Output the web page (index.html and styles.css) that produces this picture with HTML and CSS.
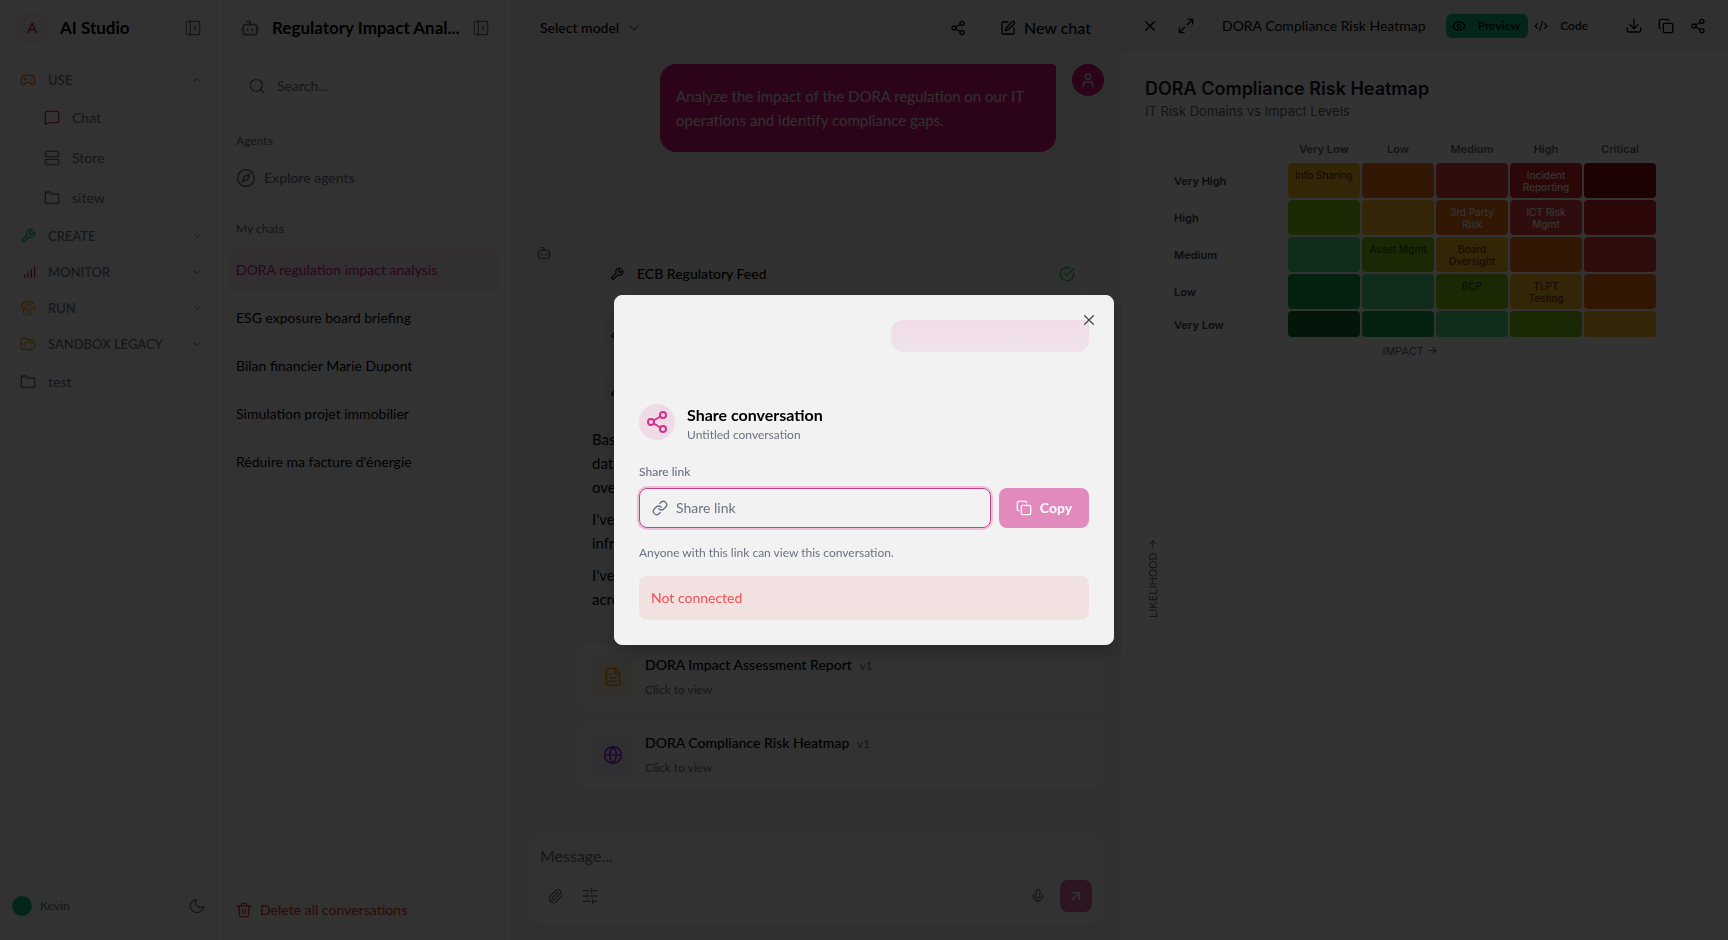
FILE: index.html
```html
<!DOCTYPE html>
<html lang="en">
<head>
    <meta charset="UTF-8">
    <meta name="viewport" content="width=device-width, initial-scale=1">
    <title>AI Studio</title>
    <link rel="stylesheet" href="styles.css">
</head>
<body>
    <!-- icon sprite -->
    <svg class="sprite" aria-hidden="true">
        <symbol id="i-panel" viewBox="0 0 24 24"><rect x="2" y="2" width="20" height="20" rx="2"/><path d="M8 2v20M16.500 9l-3 3 3 3"/></symbol>
        <symbol id="i-bot" viewBox="0 0 24 24"><path d="M12 8V4H8"/><rect x="4" y="8" width="16" height="12" rx="2"/><path d="M2 14h2M20 14h2M15 13v2M9 13v2"/></symbol>
        <symbol id="i-gamepad" viewBox="0 0 24 24"><path d="M6 11h4M8 9v4M15 12h.01M18 10h.01"/><path d="M17.320 5H6.680a4 4 0 0 0-3.978 3.590C2.604 9.416 2 14.456 2 16a3 3 0 0 0 3 3c1 0 1.500-.5 2-1l1.414-1.414A2 2 0 0 1 9.828 16h4.344a2 2 0 0 1 1.414.586L17 18c.5.5 1 1 2 1a3 3 0 0 0 3-3c0-1.545-.604-6.584-.685-7.258A4 4 0 0 0 17.320 5z"/></symbol>
        <symbol id="i-chat" viewBox="0 0 24 24"><path d="M22 17a2 2 0 0 1-2 2H6.800a2 2 0 0 0-1.400.6L2 22V4a2 2 0 0 1 2-2h16a2 2 0 0 1 2 2z"/></symbol>
        <symbol id="i-server" viewBox="0 0 24 24"><rect x="2" y="2" width="20" height="8" rx="2"/><rect x="2" y="14" width="20" height="8" rx="2"/><path d="M6 6h.01M6 18h.01"/></symbol>
        <symbol id="i-folder" viewBox="0 0 24 24"><path d="M20 20a2 2 0 0 0 2-2V8a2 2 0 0 0-2-2h-7.900a2 2 0 0 1-1.690-.9L9.600 3.900A2 2 0 0 0 7.930 3H4a2 2 0 0 0-2 2v13a2 2 0 0 0 2 2Z"/></symbol>
        <symbol id="i-folder-open" viewBox="0 0 24 24"><path d="m6 14 1.500-2.900A2 2 0 0 1 9.240 10H20a2 2 0 0 1 1.940 2.500l-1.540 6a2 2 0 0 1-1.950 1.500H4a2 2 0 0 1-2-2V5a2 2 0 0 1 2-2h3.900a2 2 0 0 1 1.690.9l.81 1.200a2 2 0 0 0 1.670.9H18a2 2 0 0 1 2 2v2"/></symbol>
        <symbol id="i-wrench" viewBox="0 0 24 24"><path d="M14.700 6.300a1 1 0 0 0 0 1.400l1.600 1.600a1 1 0 0 0 1.400 0l3.770-3.770a6 6 0 0 1-7.940 7.940l-6.910 6.910a2.120 2.120 0 0 1-3-3l6.910-6.910a6 6 0 0 1 7.940-7.940l-3.760 3.760z"/></symbol>
        <symbol id="i-signal" viewBox="0 0 24 24"><path d="M2 20h.01M7 20v-4M12 20v-8M17 20V8M22 4v16"/></symbol>
        <symbol id="i-finger" viewBox="0 0 24 24"><path d="M12 10a2 2 0 0 0-2 2c0 1.020-.1 2.510-.26 4M14 13.120c0 2.380 0 6.380-1 8.880M17.290 21.020c.12-.6.430-2.300.5-3.020M2 12a10 10 0 0 1 18-6M2 16h.01M21.800 16c.2-2 .131-5.354 0-6M5 19.500C5.500 18 6 15 6 12a6 6 0 0 1 .34-2M8.650 22c.21-.66.450-1.320.570-2M9 6.800a6 6 0 0 1 9 5.200v2"/></symbol>
        <symbol id="i-up" viewBox="0 0 24 24"><path d="m6 15 6-6 6 6"/></symbol>
        <symbol id="i-down" viewBox="0 0 24 24"><path d="m6 9 6 6 6-6"/></symbol>
        <symbol id="i-user" viewBox="0 0 24 24"><path d="M19 21v-2a4 4 0 0 0-4-4H9a4 4 0 0 0-4 4v2"/><circle cx="12" cy="7" r="4"/></symbol>
        <symbol id="i-moon" viewBox="0 0 24 24"><path d="M11 2a8 8 0 0 0 11 11A10 10 0 1 1 11 2Z"/></symbol>
        <symbol id="i-search" viewBox="0 0 24 24"><circle cx="11" cy="11" r="9"/><path d="m22 22-4.500-4.500"/></symbol>
        <symbol id="i-compass" viewBox="0 0 24 24"><circle cx="12" cy="12" r="10"/><path d="M16.240 7.760 14.400 13.200a2 2 0 0 1-1.200 1.200l-5.440 1.840L9.600 10.800a2 2 0 0 1 1.200-1.200z"/></symbol>
        <symbol id="i-trash" viewBox="0 0 24 24"><path d="M2 6h20M19 6v14a2 2 0 0 1-2 2H7a2 2 0 0 1-2-2V6M8 6V4a2 2 0 0 1 2-2h4a2 2 0 0 1 2 2v2M10 11v6M14 11v6"/></symbol>
        <symbol id="i-share" viewBox="0 0 24 24"><circle cx="18" cy="5" r="3"/><circle cx="6" cy="12" r="3"/><circle cx="18" cy="19" r="3"/><path d="m8.590 13.510 6.830 3.980M15.410 6.510l-6.820 3.980"/></symbol>
        <symbol id="i-edit" viewBox="0 0 24 24"><path d="M12 3H5a2 2 0 0 0-2 2v14a2 2 0 0 0 2 2h14a2 2 0 0 0 2-2v-7"/><path d="M18.400 2.600a2.100 2.100 0 0 1 3 3L12.400 14.600 8 16l1.400-4.400z"/></symbol>
        <symbol id="i-check" viewBox="0 0 24 24"><path d="M21.800 10A10 10 0 1 1 17 3.340"/><path d="m9 11 3 3L22 4"/></symbol>
        <symbol id="i-file" viewBox="0 0 24 24"><path d="M15 2H6a2 2 0 0 0-2 2v16a2 2 0 0 0 2 2h12a2 2 0 0 0 2-2V7Z"/><path d="M14 2v4a2 2 0 0 0 2 2h4M10 9H8M16 13H8M16 17H8"/></symbol>
        <symbol id="i-globe" viewBox="0 0 24 24"><circle cx="12" cy="12" r="10"/><path d="M12 2a14.500 14.500 0 0 0 0 20 14.500 14.500 0 0 0 0-20M2 12h20"/></symbol>
        <symbol id="i-clip" viewBox="0 0 24 24"><path d="m21.440 11.050-9.190 9.190a6 6 0 0 1-8.490-8.490l8.570-8.570A4 4 0 1 1 18 8.840l-8.590 8.570a2 2 0 0 1-2.830-2.830l8.490-8.480"/></symbol>
        <symbol id="i-sliders" viewBox="0 0 24 24"><path d="M22 4h-8M10 4H2M22 12H12M8 12H2M22 20h-6M12 20H2M14 1v6M8 9v6M16 17v6"/></symbol>
        <symbol id="i-mic" viewBox="0 0 24 24"><rect x="9" y="2" width="6" height="13" rx="3"/><path d="M19 10v2a7 7 0 0 1-14 0v-2M12 19v3"/></symbol>
        <symbol id="i-arrow" viewBox="0 0 24 24"><path d="M7 7h10v10M7 17 17 7"/></symbol>
        <symbol id="i-x" viewBox="0 0 24 24"><path d="M18.500 5.500l-13 13M5.500 5.500l13 13"/></symbol>
        <symbol id="i-expand" viewBox="0 0 24 24"><path d="M15 2h7v7M9 22H2v-7M22 2l-8 8M2 22l8-8"/></symbol>
        <symbol id="i-eye" viewBox="0 0 24 24"><path d="M2 12.300a1 1 0 0 1 0-.6 10.800 10.800 0 0 1 20 0 1 1 0 0 1 0 .6 10.800 10.800 0 0 1-20 0"/><circle cx="12" cy="12" r="3"/></symbol>
        <symbol id="i-code" viewBox="0 0 24 24"><path d="m18 16 4-4-4-4M6 8l-4 4 4 4M14.500 4l-5 16"/></symbol>
        <symbol id="i-download" viewBox="0 0 24 24"><path d="M22 15v4a2 2 0 0 1-2 2H4a2 2 0 0 1-2-2v-4M6 10l6 6 6-6M12 16V2"/></symbol>
        <symbol id="i-copy" viewBox="0 0 24 24"><rect x="8" y="8" width="14" height="14" rx="2"/><path d="M4 16a2 2 0 0 1-2-2V4a2 2 0 0 1 2-2h10a2 2 0 0 1 2 2"/></symbol>
        <symbol id="i-link" viewBox="0 0 24 24"><path d="M10 13a5 5 0 0 0 7.540.54l3-3a5 5 0 0 0-7.070-7.070l-1.720 1.710"/><path d="M14 11a5 5 0 0 0-7.540-.54l-3 3a5 5 0 0 0 7.070 7.070l1.710-1.710"/></symbol>
    </svg>

    <div class="app">
        <aside class="sidebar">
            <header class="side-header">
                <span class="logo">A</span>
                <span class="brand">AI Studio</span>
                <button class="icon-btn" aria-label="Collapse sidebar"><svg class="icon"><use href="#i-panel"/></svg></button>
            </header>
            <nav class="nav">
                <button class="nav-group"><svg class="icon orange"><use href="#i-gamepad"/></svg><span>USE</span><svg class="chev"><use href="#i-up"/></svg></button>
                <a class="nav-item sub" href="#"><svg class="icon rose"><use href="#i-chat"/></svg>Chat</a>
                <a class="nav-item sub" href="#"><svg class="icon"><use href="#i-server"/></svg>Store</a>
                <a class="nav-item sub" href="#"><svg class="icon"><use href="#i-folder"/></svg>sitew</a>
                <button class="nav-group"><svg class="icon green"><use href="#i-wrench"/></svg><span>CREATE</span><svg class="chev"><use href="#i-down"/></svg></button>
                <button class="nav-group"><svg class="icon rose"><use href="#i-signal"/></svg><span>MONITOR</span><svg class="chev"><use href="#i-down"/></svg></button>
                <button class="nav-group"><svg class="icon amber"><use href="#i-finger"/></svg><span>RUN</span><svg class="chev"><use href="#i-down"/></svg></button>
                <button class="nav-group"><svg class="icon amber"><use href="#i-folder-open"/></svg><span>SANDBOX LEGACY</span><svg class="chev"><use href="#i-down"/></svg></button>
                <a class="nav-item" href="#"><svg class="icon"><use href="#i-folder"/></svg>test</a>
            </nav>
            <footer class="user">
                <span class="user-pic"><svg><use href="#i-user"/></svg></span>
                <span class="user-name">Kevin</span>
                <button class="icon-btn" aria-label="Dark mode"><svg class="icon"><use href="#i-moon"/></svg></button>
            </footer>
        </aside>

        <aside class="chats">
            <header class="side-header">
                <svg class="icon-lg"><use href="#i-bot"/></svg>
                <span class="brand">Regulatory Impact Anal...</span>
                <button class="icon-btn" aria-label="Collapse chats"><svg class="icon"><use href="#i-panel"/></svg></button>
            </header>
            <div class="chats-body">
                <label class="search">
                    <svg class="icon"><use href="#i-search"/></svg>
                    <input type="text" placeholder="Search..." aria-label="Search">
                </label>
                <h2 class="label">Agents</h2>
                <a class="explore" href="#"><svg class="icon-lg"><use href="#i-compass"/></svg>Explore agents</a>
                <h2 class="label">My chats</h2>
                <div class="chat-list">
                    <a class="active" href="#">DORA regulation impact analysis</a>
                    <a href="#">ESG exposure board briefing</a>
                    <a href="#">Bilan financier Marie Dupont</a>
                    <a href="#">Simulation projet immobilier</a>
                    <a href="#">Réduire ma facture d'énergie</a>
                </div>
            </div>
            <footer class="chats-footer">
                <button class="delete"><svg class="icon"><use href="#i-trash"/></svg>Delete all conversations</button>
            </footer>
        </aside>

        <main class="chat">
            <header class="chat-header">
                <button class="model">Select model<svg class="icon"><use href="#i-down"/></svg></button>
                <button class="icon-btn" aria-label="Share"><svg class="icon"><use href="#i-share"/></svg></button>
                <button class="new-chat"><svg class="icon"><use href="#i-edit"/></svg>New chat</button>
            </header>
            <div class="messages">
                <div class="msg-user">
                    <p class="bubble">Analyze the impact of the DORA regulation on our IT operations and identify compliance gaps.</p>
                    <span class="avatar"><svg class="icon"><use href="#i-user"/></svg></span>
                </div>
                <div class="msg-bot">
                    <svg class="icon bot"><use href="#i-bot"/></svg>
                    <div class="bot-body">
                        <div class="tool"><span class="tool-icon"><svg class="icon-sm"><use href="#i-wrench"/></svg></span><span>ECB Regulatory Feed</span><svg class="icon ok"><use href="#i-check"/></svg></div>
                        <div class="tool"><span class="tool-icon"><svg class="icon-sm"><use href="#i-wrench"/></svg></span></div>
                        <div class="tool"><span class="tool-icon"><svg class="icon-sm"><use href="#i-wrench"/></svg></span></div>
                        <div class="answer">
                            <p>Bas<br>data<br>over</p>
                            <p>I've<br>infra</p>
                            <p>I've<br>acro</p>
                        </div>
                    </div>
                </div>
                <div class="artifacts">
                    <a class="artifact" href="#">
                        <span class="art-icon doc"><svg class="icon-lg"><use href="#i-file"/></svg></span>
                        <span class="art-text"><span class="art-title">DORA Impact Assessment Report <small>v1</small></span><span class="art-sub">Click to view</span></span>
                    </a>
                    <a class="artifact" href="#">
                        <span class="art-icon web"><svg class="icon-lg"><use href="#i-globe"/></svg></span>
                        <span class="art-text"><span class="art-title">DORA Compliance Risk Heatmap <small>v1</small></span><span class="art-sub">Click to view</span></span>
                    </a>
                </div>
            </div>
            <form class="composer">
                <textarea rows="1" placeholder="Message..." aria-label="Message"></textarea>
                <div class="composer-bar">
                    <button type="button" class="tool-btn" aria-label="Attach"><svg class="icon"><use href="#i-clip"/></svg></button>
                    <button type="button" class="tool-btn" aria-label="Settings"><svg class="icon"><use href="#i-sliders"/></svg></button>
                    <button type="button" class="tool-btn mic" aria-label="Record"><svg class="icon"><use href="#i-mic"/></svg></button>
                    <button type="button" class="send" aria-label="Send"><svg class="icon"><use href="#i-arrow"/></svg></button>
                </div>
            </form>
        </main>

        <section class="panel">
            <header class="panel-header">
                <button class="bar-btn" aria-label="Close panel"><svg class="icon"><use href="#i-x"/></svg></button>
                <button class="bar-btn" aria-label="Expand"><svg class="icon"><use href="#i-expand"/></svg></button>
                <span class="panel-title">DORA Compliance Risk Heatmap</span>
                <div class="tabs">
                    <button class="tab on"><svg class="icon-sm"><use href="#i-eye"/></svg>Preview</button>
                    <button class="tab"><svg class="icon-sm"><use href="#i-code"/></svg>Code</button>
                </div>
                <div class="panel-actions">
                    <button class="bar-btn" aria-label="Download"><svg class="icon"><use href="#i-download"/></svg></button>
                    <button class="bar-btn" aria-label="Copy"><svg class="icon"><use href="#i-copy"/></svg></button>
                    <button class="bar-btn" aria-label="Share"><svg class="icon"><use href="#i-share"/></svg></button>
                </div>
            </header>
            <div class="panel-body">
                <h1>DORA Compliance Risk Heatmap</h1>
                <p class="subtitle">IT Risk Domains vs Impact Levels</p>
                <div class="heatmap">
                    <table>
                        <thead>
                            <tr><th></th><th>Very Low</th><th>Low</th><th>Medium</th><th>High</th><th>Critical</th></tr>
                        </thead>
                        <tbody>
                            <tr><th>Very High</th><td class="c4">Info Sharing</td><td class="c5"></td><td class="c6"></td><td class="c7">Incident Reporting</td><td class="c8"></td></tr>
                            <tr><th>High</th><td class="c3"></td><td class="c4"></td><td class="c5">3rd Party Risk</td><td class="c6">ICT Risk Mgmt</td><td class="c7"></td></tr>
                            <tr><th>Medium</th><td class="c2"></td><td class="c3">Asset Mgmt</td><td class="c4">Board Oversight</td><td class="c5"></td><td class="c6"></td></tr>
                            <tr><th>Low</th><td class="c1"></td><td class="c2"></td><td class="c3">BCP</td><td class="c4">TLPT Testing</td><td class="c5"></td></tr>
                            <tr><th>Very Low</th><td class="c0"></td><td class="c1"></td><td class="c2"></td><td class="c3"></td><td class="c4"></td></tr>
                        </tbody>
                    </table>
                    <p class="axis-x">IMPACT →</p>
                </div>
                <p class="axis-y">LIKELIHOOD →</p>
            </div>
        </section>
    </div>

    <div class="overlay">
        <div class="modal" role="dialog" aria-labelledby="share-title">
            <button class="modal-close" aria-label="Close"><svg class="icon"><use href="#i-x"/></svg></button>
            <div class="ghost"></div>
            <div class="modal-head">
                <span class="modal-icon"><svg><use href="#i-share"/></svg></span>
                <div>
                    <h2 id="share-title">Share conversation</h2>
                    <p>Untitled conversation</p>
                </div>
            </div>
            <label class="modal-label" for="share-link">Share link</label>
            <div class="share-row">
                <div class="share-field">
                    <svg class="icon"><use href="#i-link"/></svg>
                    <input id="share-link" type="text" placeholder="Share link">
                </div>
                <button class="copy"><svg class="icon"><use href="#i-copy"/></svg>Copy</button>
            </div>
            <p class="hint">Anyone with this link can view this conversation.</p>
            <div class="alert">Not connected</div>
        </div>
    </div>
</body>
</html>
```
FILE: styles.css
```css
* {
    box-sizing: border-box;
}
body {
    margin: 0;
    font-family: Lato, "Liberation Sans", sans-serif;
    font-size: 14px;
    line-height: 20px;
    color: #000;
    background: #f0f0f0;
}
h1, h2, p {
    margin: 0;
}
a {
    color: inherit;
    text-decoration: none;
}
button, input, textarea {
    font: inherit;
    color: inherit;
    background: none;
    border: 0;
    padding: 0;
    outline: none;
}
svg {
    fill: none;
    stroke: currentColor;
    stroke-width: 2;
    stroke-linecap: round;
    stroke-linejoin: round;
    flex-shrink: 0;
}
.sprite {
    display: none;
}
.icon {
    width: 16px;
    height: 16px;
}
.icon-lg {
    width: 20px;
    height: 20px;
}
.icon-sm {
    width: 14px;
    height: 14px;
}
.icon-btn {
    display: flex;
    color: #6b7280;
}
.orange { color: #f97316; }
.rose { color: #db2777; }
.green { color: #10b981; }
.amber { color: #f59e0b; }

.app {
    display: flex;
    height: 100vh;
}

/* left sidebar */
.sidebar, .chats {
    display: flex;
    flex-direction: column;
    flex-shrink: 0;
    background: #fafafa;
    border-right: 1px solid #e5e7eb;
}
.sidebar {
    width: 224px;
    color: #6b7280;
}
.side-header {
    display: flex;
    align-items: center;
    gap: 12px;
    height: 56px;
    padding: 0 22px 0 16px;
    border-bottom: 1px solid #e5e7eb;
}
.logo {
    width: 32px;
    height: 32px;
    line-height: 32px;
    border-radius: 8px;
    background: #f6e8f0;
    color: #d2228a;
    font-weight: 700;
    text-align: center;
}
.brand {
    flex: 1;
    margin-right: -4px;
    color: #000;
    font-size: 17px;
    font-weight: 700;
    white-space: nowrap;
    overflow: hidden;
    text-overflow: ellipsis;
}
.nav {
    flex: 1;
    padding-top: 6px;
}
.nav-group, .nav-item {
    display: flex;
    align-items: center;
    gap: 12px;
    width: 100%;
    padding: 0 20px;
}
.nav-group {
    height: 36px;
    font-size: 13px;
    font-weight: 500;
    text-align: left;
}
.nav-group span {
    flex: 1;
}
.nav-item {
    height: 40px;
}
.nav-item.sub {
    padding-left: 44px;
}
.chev {
    width: 12px;
    height: 12px;
}
.user {
    display: flex;
    align-items: center;
    gap: 8px;
    height: 69px;
    padding: 0 18px 0 12px;
    border-top: 1px solid #e5e7eb;
    font-size: 12px;
    font-weight: 500;
}
.user-pic {
    display: flex;
    align-items: center;
    justify-content: center;
    width: 20px;
    height: 20px;
    border-radius: 50%;
    background: #10b981;
}
.user-pic svg {
    width: 8px;
    height: 8px;
    opacity: 0.4;
}
.user-name {
    flex: 1;
}

/* conversation list */
.chats {
    width: 288px;
}
.chats .side-header > svg {
    color: #6b7280;
}
.chats-body {
    flex: 1;
    padding: 12px 12px 0;
}
.search {
    display: flex;
    align-items: center;
    gap: 12px;
    height: 36px;
    padding: 0 12px;
    border: 1px solid #ededed;
    border-radius: 8px;
    background: #fcfcfc;
    color: #6b7280;
}
.search input {
    flex: 1;
    min-width: 0;
}
::placeholder {
    color: #6b7280;
    opacity: 1;
}
.label {
    margin-top: 27px;
    color: #6b7280;
    font-size: 12px;
    font-weight: 500;
}
.explore {
    display: flex;
    align-items: center;
    gap: 8px;
    height: 36px;
    margin-top: 9px;
    color: #6b7280;
    font-weight: 500;
}
.explore + .label {
    margin-top: 23px;
}
.chat-list {
    display: flex;
    flex-direction: column;
    gap: 4px;
    margin: 9px 0 0 -8px;
}
.chat-list a {
    padding: 12px 8px;
    border-radius: 8px;
}
.chat-list .active {
    background: #f6e8ee;
    color: #d2228a;
}
.chats-footer {
    display: flex;
    align-items: center;
    height: 61px;
    padding: 0 12px;
    border-top: 1px solid #e5e7eb;
}
.delete {
    display: flex;
    align-items: center;
    gap: 8px;
    color: #e0403e;
    font-weight: 500;
}

/* chat */
.chat {
    flex: 1;
    min-width: 0;
    display: flex;
    flex-direction: column;
    padding-bottom: 16px;
}
.chat-header {
    display: flex;
    align-items: center;
    height: 56px;
    padding: 0 29px 0 28px;
}
.chat-header .icon-btn {
    margin: 0 34px 0 auto;
    color: #000;
}
.model {
    display: flex;
    align-items: center;
    gap: 7px;
    font-weight: 500;
}
.model .icon {
    color: #6b7280;
}
.new-chat {
    display: flex;
    align-items: center;
    gap: 8px;
    font-size: 16px;
    font-weight: 500;
}
.messages {
    flex: 1;
    overflow: hidden;
    padding: 8px 16px 0;
}
.msg-user {
    display: flex;
    justify-content: flex-end;
    gap: 16px;
}
.bubble {
    max-width: 396px;
    padding: 20px 16px;
    border-radius: 16px 4px 16px 16px;
    background: #d9187f;
    color: #f5e6f0;
    font-size: 15px;
    line-height: 24px;
}
.avatar {
    display: flex;
    align-items: center;
    justify-content: center;
    width: 32px;
    height: 32px;
    border-radius: 50%;
    background: #d9187f;
    color: #f5e6f0;
}
.msg-bot {
    display: flex;
    gap: 40px;
    margin-top: 97px;
    padding: 0 16px 0 8px;
}
.bot {
    margin-top: -4px;
    color: #6b7280;
}
.bot-body {
    flex: 1;
}
.tool {
    display: flex;
    align-items: center;
    gap: 8px;
    height: 50px;
    margin-bottom: 8px;
    padding: 0 12px;
    border: 1px solid #f4f4f5;
    border-radius: 8px;
    background: #f5f5f5;
    font-weight: 500;
}
.tool-icon {
    display: flex;
    align-items: center;
    justify-content: center;
    width: 24px;
    height: 24px;
    border-radius: 6px;
    background: #ededed;
}
.ok {
    margin-left: auto;
    color: #22c55e;
}
.answer {
    margin-top: 12px;
    font-size: 15px;
    line-height: 24px;
}
.answer p + p {
    margin-top: 8px;
}
.artifacts {
    display: flex;
    flex-direction: column;
    gap: 10px;
    margin: 32px 0 0 49px;
}
.artifact {
    display: flex;
    align-items: center;
    gap: 12px;
    height: 68px;
    padding: 0 15px;
    border: 1px solid #f4f4f5;
    border-radius: 8px;
    background: #f8f8f8;
}
.art-icon {
    display: flex;
    align-items: center;
    justify-content: center;
    width: 40px;
    height: 40px;
    border-radius: 8px;
}
.doc {
    background: #f6efe2;
    color: #f59e0b;
}
.web {
    background: #f0ecf5;
    color: #9333ea;
}
.art-text {
    display: flex;
    flex-direction: column;
    gap: 4px;
}
.art-title {
    font-weight: 500;
}
.art-title small {
    margin-left: 4px;
    color: #6b7280;
    font-size: 12px;
    font-weight: 400;
}
.art-sub {
    color: #6b7280;
    font-size: 12px;
}
.composer {
    margin: 0 16px;
    padding: 12px;
    border-radius: 16px;
    background: #fafafa;
    color: #6b7280;
}
.composer textarea {
    display: block;
    width: 100%;
    height: 36px;
    resize: none;
    font-size: 16px;
    line-height: 24px;
}
.composer-bar {
    display: flex;
    align-items: center;
    gap: 2px;
}
.tool-btn, .send {
    display: flex;
    align-items: center;
    justify-content: center;
    width: 32px;
    height: 32px;
}
.mic {
    margin: 0 4px 0 auto;
}
.send {
    border-radius: 8px;
    background: #dd70ad;
    color: #fff;
}

/* artifact panel */
.panel {
    flex: 1;
    min-width: 0;
    display: flex;
    flex-direction: column;
}
.panel-header {
    display: flex;
    align-items: center;
    gap: 4px;
    height: 52px;
    padding: 0 14px;
}
.bar-btn {
    display: flex;
    align-items: center;
    justify-content: center;
    width: 32px;
    height: 32px;
}
.panel-title {
    flex: 1;
    margin-left: 16px;
    white-space: nowrap;
}
.tabs, .panel-actions {
    display: flex;
}
.panel-actions {
    margin-left: 18px;
}
.tab {
    display: flex;
    align-items: center;
    gap: 12px;
    height: 24px;
    padding: 0 8px 0 6px;
    border-radius: 6px;
    font-size: 12px;
    font-weight: 500;
}
.tab.on {
    background: #10b981;
}
.panel-body {
    flex: 1;
    padding: 24px;
    border: solid #eceef0;
    border-width: 1px 0 0 1px;
    border-radius: 6px 0 0 0;
    background: #fff;
    font-family: Inter, sans-serif;
}
.panel-body h1 {
    font-size: 18px;
    font-weight: 600;
    line-height: 24px;
    color: #1a1a2e;
}
.subtitle {
    color: #666;
    font-size: 13px;
}
.heatmap {
    max-width: 530px;
    margin-top: 18px;
}
.heatmap table {
    margin-left: 27px;
    border-spacing: 2px;
    table-layout: fixed;
    width: 486px;
}
.heatmap th, .heatmap td {
    height: 35px;
    padding: 6px 6px 5px;
    font-size: 10px;
    line-height: 12px;
    vertical-align: top;
    text-align: center;
}
.heatmap th {
    color: #374151;
    font-size: 11px;
    font-weight: 600;
    vertical-align: middle;
}
.heatmap th:first-child {
    width: 112px;
    padding-left: 0;
    text-align: left;
}
.heatmap thead th {
    height: 20px;
    padding: 0 0 4px;
    color: #666;
}
.heatmap tr:last-child td {
    height: 26px;
}
.heatmap tbody tr:last-child th {
    height: 26px;
}
.heatmap td {
    border-radius: 4px;
    font-weight: 500;
}
.c0 { background: #14702f; }
.c1 { background: #16a34a; }
.c2 { background: #4ade80; }
.c3 { background: #84cc16; color: #365314; }
.c4 { background: #fbbf24; color: #78350f; }
.c5 { background: #f97316; color: #fff; }
.c6 { background: #ef4444; color: #fff; }
.c7 { background: #dc2626; color: #fff; }
.c8 { background: #8b0a0a; }
.axis-x {
    margin-top: 2px;
    color: #666;
    font-size: 11px;
    text-align: center;
}
.axis-y {
    margin-top: 178px;
    width: 16px;
    color: #666;
    font-size: 11px;
    line-height: 16px;
    writing-mode: vertical-rl;
    transform: rotate(180deg);
}

/* share dialog */
.overlay {
    position: fixed;
    inset: 0;
    display: flex;
    align-items: center;
    justify-content: center;
    background: rgba(0, 0, 0, 0.8);
}
.modal {
    position: relative;
    width: 500px;
    padding: 24px;
    border: 1px solid #f0f1f2;
    border-radius: 8px;
    background: #f2f2f3;
    box-shadow: 0 8px 16px rgba(0, 0, 0, 0.2);
}
.modal-close {
    position: absolute;
    top: 16px;
    right: 16px;
    display: flex;
    color: #4a4a4c;
}
.ghost {
    width: 198px;
    height: 32px;
    margin-left: auto;
    border-radius: 12px 4px 12px 12px;
    background: linear-gradient(#f1dce7, #efe3eb);
}
.modal-head {
    display: flex;
    gap: 12px;
    margin-top: 52px;
}
.modal-icon {
    display: flex;
    align-items: center;
    justify-content: center;
    width: 36px;
    height: 36px;
    border-radius: 50%;
    background: #efdbe6;
    color: #d2308c;
}
.modal-icon svg {
    width: 24px;
    height: 24px;
}
.modal-head h2 {
    font-size: 16px;
    font-weight: 700;
    line-height: 21px;
}
.modal-head p {
    color: #6b7280;
    font-size: 12px;
}
.modal-head > div {
    height: 36px;
}
.modal-label {
    display: block;
    margin-top: 24px;
    color: #6b7280;
    font-size: 12px;
    font-weight: 500;
    line-height: 16px;
}
.share-row {
    display: flex;
    gap: 8px;
    margin-top: 8px;
}
.share-field {
    flex: 1;
    display: flex;
    align-items: center;
    gap: 8px;
    height: 40px;
    padding: 0 12px;
    border: 1px solid #c2408a;
    border-radius: 8px;
    box-shadow: 0 0 0 2px #eebedb;
    color: #6b7280;
}
.share-field input {
    flex: 1;
    min-width: 0;
}
.copy {
    display: flex;
    align-items: center;
    justify-content: center;
    gap: 8px;
    width: 90px;
    height: 40px;
    border-radius: 8px;
    background: #e28abd;
    color: #fff;
    font-weight: 700;
}
.hint {
    margin-top: 17px;
    color: #6b7280;
    font-size: 12px;
    line-height: 16px;
}
.alert {
    margin-top: 15px;
    padding: 12px;
    border-radius: 8px;
    background: #f2e1e1;
    color: #ef4f4f;
}
```
